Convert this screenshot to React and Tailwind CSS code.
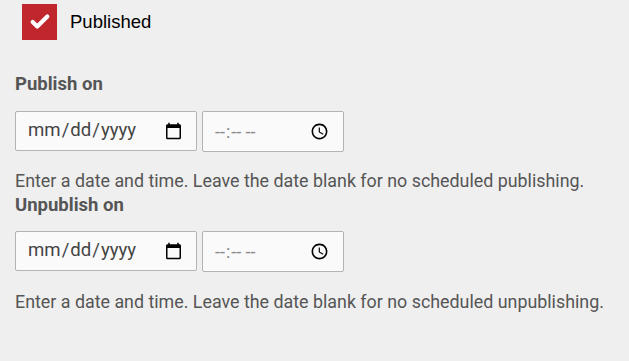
import { Check } from 'lucide-react'

function DateTimeRow() {
  return (
    <div className="flex items-center gap-[5px]">
      <input
        type="date"
        className="h-[40px] w-[182px] rounded-[2px] border border-[#b3b3b3] bg-[#fafafa] px-[11px] text-[18.6px] text-[#444] [font-family:Roboto,sans-serif]"
      />
      <input
        type="time"
        className="h-[41px] w-[142px] rounded-[2px] border border-[#b3b3b3] bg-[#fafafa] px-[11px] text-[18px] text-[#888] [font-family:Roboto,sans-serif]"
      />
    </div>
  )
}

export default function App() {
  return (
    <div className="min-h-[361px] bg-[#efefef] px-[15px] pt-[4px] [font-family:Roboto,sans-serif]">
      <label className="flex items-center gap-[13px] pl-[7px]">
        <span className="flex h-[36px] w-[35px] items-center justify-center bg-[#c0272d]">
          <Check className="h-[22px] w-[22px] text-white" strokeWidth={4.5} />
        </span>
        <span className="text-[18.5px] text-black [font-family:'Liberation_Sans',Arial,sans-serif]">Published</span>
      </label>

      <div className="mt-[31px] text-[18.5px] font-bold text-[#555]">Publish on</div>
      <div className="mt-[12px]">
        <DateTimeRow />
      </div>
      <p className="mt-[16px] text-[17.85px] leading-[25px] text-[#555]">
        Enter a date and time. Leave the date blank for no scheduled publishing.
      </p>
      <div className="text-[18.5px] font-bold leading-[25px] text-[#555]">Unpublish on</div>
      <div className="mt-[13px]">
        <DateTimeRow />
      </div>
      <p className="mt-[17px] text-[17.85px] leading-[25px] text-[#555]">
        Enter a date and time. Leave the date blank for no scheduled unpublishing.
      </p>
    </div>
  )
}
